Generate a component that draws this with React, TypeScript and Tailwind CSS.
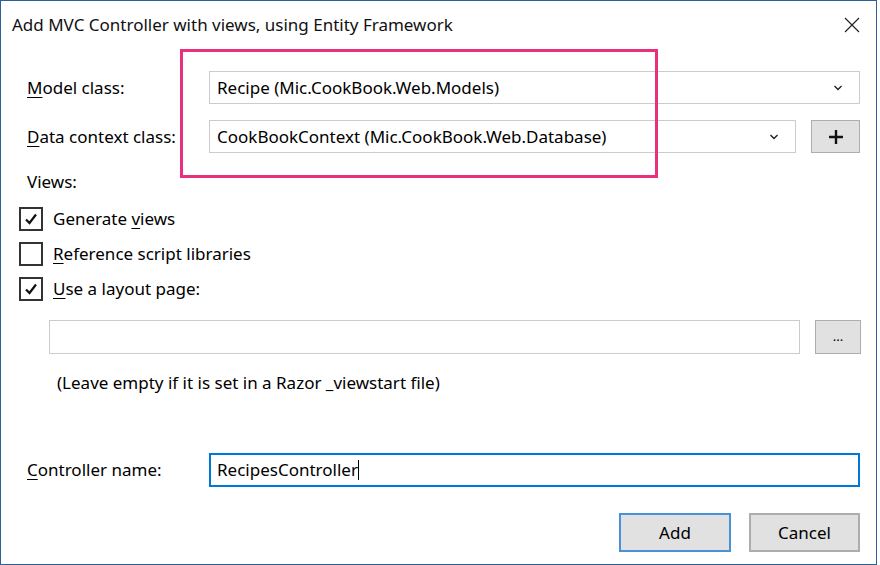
import React from "react";

const font = { fontFamily: '"Noto Sans", "Open Sans", sans-serif' };

const Chevron = () => (
  <svg width="10" height="6" viewBox="0 0 10 6" className="shrink-0">
    <path d="M1.5 1 L5 4.5 L8.5 1" fill="none" stroke="#222" strokeWidth="1.4" />
  </svg>
);

const Check = ({ checked }: { checked: boolean }) => (
  <div className="w-[24px] h-[24px] border-2 border-[#333] bg-white flex items-center justify-center shrink-0">
    {checked && (
      <svg width="14" height="14" viewBox="0 0 14 14">
        <path d="M2 7.5 L5.5 11 L12 2.5" fill="none" stroke="#111" strokeWidth="2.2" />
      </svg>
    )}
  </div>
);

const Ul = ({ c }: { c: string }) => <span className="underline underline-offset-[3px] decoration-1">{c}</span>;

const Select = ({ value, width }: { value: string; width: string }) => (
  <div className={`${width} h-[33px] border border-[#cccccc] bg-white flex items-center pl-[7px] pr-[16px] justify-between`}>
    <span>{value}</span>
    <Chevron />
  </div>
);

export default function App() {
  return (
    <div className="w-[880px] h-[565px] bg-white text-[17px] text-black" style={font}>
      <div className="w-[877px] h-[565px] border border-[#2d5f93] relative flex flex-col">
        <div className="h-[48px] flex items-center justify-between pl-[11px] pr-[16px]">
          <span className="text-[17px] text-[#111]">Add MVC Controller with views, using Entity Framework</span>
          <svg width="16" height="16" viewBox="0 0 16 16">
            <path d="M1 1 L15 15 M15 1 L1 15" stroke="#222" strokeWidth="1.2" />
          </svg>
        </div>

        {/* highlight box */}
        <div className="absolute left-[179px] top-[48px] w-[478px] h-[129px] border-[3px] border-[#e8317a]" />

        <div className="flex items-center h-[33px] mt-[22px]">
          <div className="w-[208px] pl-[26px]">
            <Ul c="M" />odel class:
          </div>
          <Select value="Recipe (Mic.CookBook.Web.Models)" width="w-[651px]" />
        </div>

        <div className="flex items-center h-[33px] mt-[16px]">
          <div className="w-[208px] pl-[26px]">
            <Ul c="D" />ata context class:
          </div>
          <Select value="CookBookContext (Mic.CookBook.Web.Database)" width="w-[587px]" />
          <div className="ml-[15px] w-[49px] h-[33px] border border-[#adadad] bg-[#e1e1e1] flex items-center justify-center">
            <svg width="16" height="16" viewBox="0 0 16 16">
              <path d="M8 1 V15 M1 8 H15" stroke="#111" strokeWidth="2.4" />
            </svg>
          </div>
        </div>

        <div className="pl-[26px] mt-[16px] h-[26px] flex items-center">Views:</div>

        <div className="flex flex-col gap-[11px] pl-[18px] mt-[12px]">
          <div className="flex items-center gap-[10px] h-[24px]">
            <Check checked />
            <span>Generate <Ul c="v" />iews</span>
          </div>
          <div className="flex items-center gap-[10px] h-[24px]">
            <Check checked={false} />
            <span><Ul c="R" />eference script libraries</span>
          </div>
          <div className="flex items-center gap-[10px] h-[24px]">
            <Check checked />
            <span><Ul c="U" />se a layout page:</span>
          </div>
        </div>

        <div className="flex items-center mt-[19px] pl-[48px]">
          <div className="w-[751px] h-[34px] border border-[#cccccc] bg-white" />
          <div className="ml-[15px] w-[46px] h-[34px] border border-[#adadad] bg-[#e1e1e1] flex items-center justify-center text-[13px] leading-none pb-[2px]">
            ...
          </div>
        </div>

        <div className="pl-[56px] mt-[16px] h-[26px] flex items-center">
          (Leave empty if it is set in a Razor _viewstart file)
        </div>

        <div className="flex items-center h-[34px] mt-[57px]">
          <div className="w-[208px] pl-[26px]">
            <Ul c="C" />ontroller name:
          </div>
          <div className="w-[651px] h-[34px] border-2 border-[#0078d7] bg-white flex items-center pl-[6px]">
            <span>RecipesController</span>
            <span className="w-px h-[20px] bg-black" />
          </div>
        </div>

        <div className="flex justify-end gap-[18px] pr-[16px] mt-[26px]">
          <div className="w-[112px] h-[39px] border-2 border-[#4a92d8] bg-[#e1e1e1] flex items-center justify-center">Add</div>
          <div className="w-[111px] h-[39px] border-2 border-[#adadad] bg-[#e1e1e1] flex items-center justify-center">Cancel</div>
        </div>
      </div>
    </div>
  );
}
